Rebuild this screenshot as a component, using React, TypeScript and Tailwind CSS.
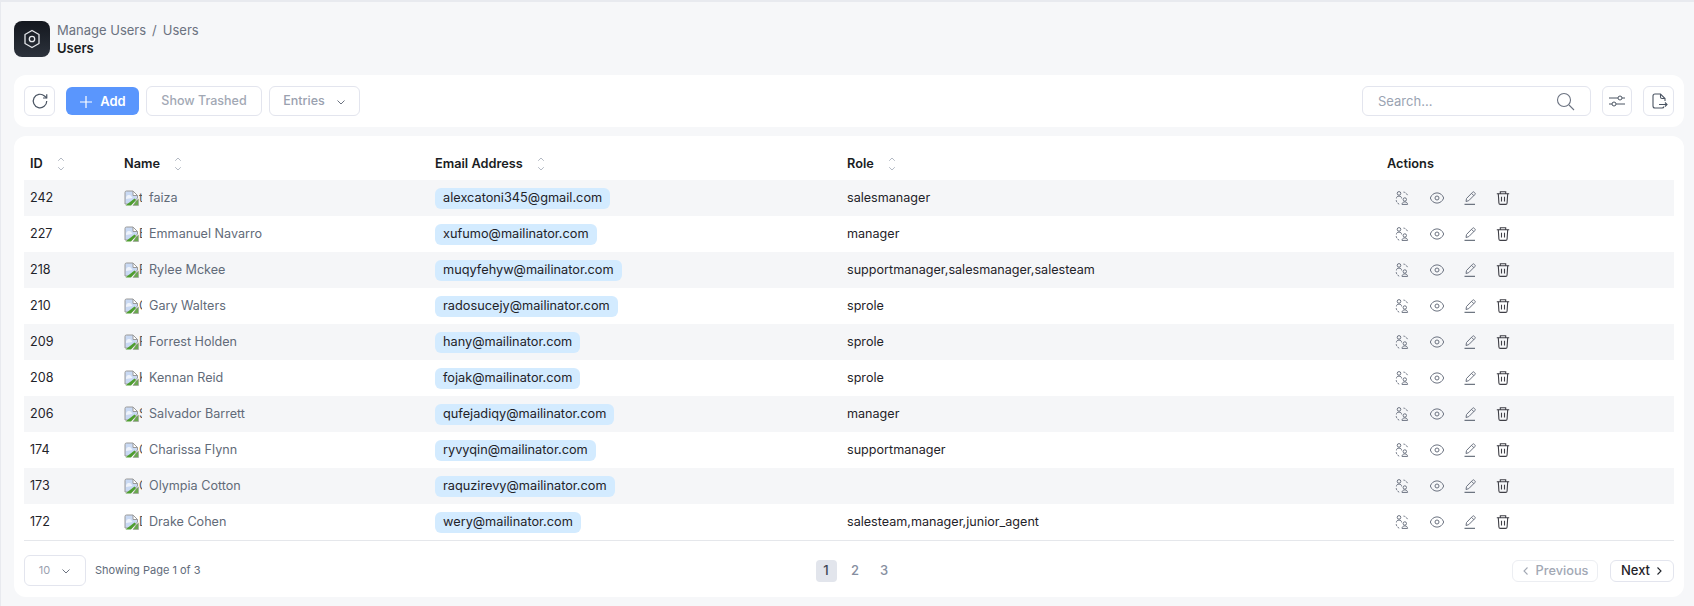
import React from "react";

const rows: [string, string, string, string, string][] = [
  ["242", "t", "faiza", "alexcatoni345@gmail.com", "salesmanager"],
  ["227", "E", "Emmanuel Navarro", "xufumo@mailinator.com", "manager"],
  ["218", "R", "Rylee Mckee", "muqyfehyw@mailinator.com", "supportmanager,salesmanager,salesteam"],
  ["210", "G", "Gary Walters", "radosucejy@mailinator.com", "sprole"],
  ["209", "F", "Forrest Holden", "hany@mailinator.com", "sprole"],
  ["208", "K", "Kennan Reid", "fojak@mailinator.com", "sprole"],
  ["206", "S", "Salvador Barrett", "qufejadiqy@mailinator.com", "manager"],
  ["174", "C", "Charissa Flynn", "ryvyqin@mailinator.com", "supportmanager"],
  ["173", "O", "Olympia Cotton", "raquzirevy@mailinator.com", ""],
  ["172", "D", "Drake Cohen", "wery@mailinator.com", "salesteam,manager,junior_agent"],
];

function Sort() {
  return (
    <svg width="10" height="16" viewBox="0 0 10 16" fill="none" stroke="#b4bac4" strokeWidth="1" className="ml-[13px]">
      <path d="M2.200 4.800L5 2l2.800 2.800" />
      <path d="M2.200 11.200L5 14l2.800-2.800" />
    </svg>
  );
}

function Broken() {
  return (
    <svg width="15" height="16" viewBox="0 0 15 16" className="shrink-0">
      <path d="M1 14V2.500A1.500 1.500 0 0 1 2.500 1H9l4.500 4.500V8l-3 3-3 3z" fill="#c9d9f3" stroke="#9a9a9a" strokeWidth="1" />
      <path d="M9 1v4.500h4.500z" fill="#fff" stroke="#9a9a9a" strokeWidth="1" />
      <path d="M2 7.500a3 3 0 0 1 5.500-1l1 1.500-6.500 1z" fill="#eef3fb" />
      <path d="M1.500 15.500l9-7 1.500 1.500-5 5.500z" fill="#4e9e2f" />
      <path d="M12 11l2.500-2v6.500H9z" fill="#6aa84f" stroke="#9a9a9a" strokeWidth="0.600" />
    </svg>
  );
}

function Swap() {
  return (
    <svg width="16" height="16" viewBox="0 0 16 16" fill="none" stroke="#6b7280" strokeWidth="1">
      <circle cx="5" cy="3.400" r="1.800" />
      <path d="M2.400 8.400c0-1.500 1.100-2.300 2.600-2.300s2.600.8 2.600 2.300" />
      <circle cx="10.800" cy="9.500" r="1.700" />
      <path d="M8 14.400h5.600c0-1.500-1.200-2.500-2.800-2.500S8 12.900 8 14.400z" />
      <path d="M9.500 2.100c2 .2 3.800 1.700 4.200 3.900M2.200 10.200c.2 1.900 1.400 3.400 3.400 4.200" strokeDasharray="2 1.200" />
    </svg>
  );
}

function Eye() {
  return (
    <svg width="16" height="16" viewBox="0 0 16 16" fill="none" stroke="#6b7280" strokeWidth="1">
      <path d="M1.300 8C2.500 4.600 5.200 2.900 8 2.900s5.500 1.700 6.700 5.100c-1.200 3.400-3.900 5.100-6.700 5.100S2.500 11.400 1.300 8z" />
      <circle cx="8" cy="8" r="2" />
    </svg>
  );
}

function Pen() {
  return (
    <svg width="16" height="16" viewBox="0 0 16 16" fill="none" stroke="#6b7280" strokeWidth="1">
      <path d="M4 11.500l.5-3 6-6.200a1.200 1.200 0 0 1 1.800 0l.5.500a1.200 1.200 0 0 1 0 1.800l-6 6z" />
      <path d="M9.500 3.300l2.500 2.500" />
      <path d="M2.500 14.300h10.500" stroke="#4b5563" />
    </svg>
  );
}

function Trash() {
  return (
    <svg width="16" height="16" viewBox="0 0 16 16" fill="none" stroke="#3f3f46" strokeWidth="1.100">
      <path d="M1.800 3.800h12.400M5.300 3.800V1.800h5.400v2" />
      <path d="M3.300 3.800l.6 9.200a1.500 1.500 0 0 0 1.500 1.400h5.200a1.500 1.500 0 0 0 1.500-1.400l.6-9.200" />
      <path d="M6.500 6.800v4.700M9.500 6.800v4.700" />
    </svg>
  );
}

const bordered = "border border-[#e3e5ee] rounded-md bg-white";
const cols = "grid grid-cols-[100px_311px_412px_540px_1fr] items-center";

export default function App() {
  return (
    <div className="h-[606px] overflow-hidden border-t-2 border-l border-[#e8eaef] bg-[#f6f7f9] pl-[13px] pr-[10px] text-[12.6px] font-['Inter',sans-serif] text-[#1f2329]">
      <div className="flex h-[73px] items-start pt-[19px]">
        <div className="flex h-9 w-9 items-center justify-center rounded-lg bg-gradient-to-b from-[#14181f] to-[#2c323c]">
          <svg width="20" height="20" viewBox="0 0 20 20" fill="none" stroke="#e5e7eb" strokeWidth="1.300">
            <path d="M10 1.500l7 4v9l-7 4-7-4v-9z" strokeLinejoin="round" />
            <circle cx="10" cy="10" r="2.700" />
          </svg>
        </div>
        <div className="ml-[7px]">
          <div className="flex h-[18px] items-center text-[13px] leading-[18px] text-[#6b7280]">
            <span>Manage Users</span>
            <span className="mx-[6px]">/</span>
            <span>Users</span>
          </div>
          <div className="h-[18px] text-[13px] font-semibold leading-[18px] text-[#1a1d23]">Users</div>
        </div>
      </div>

      <div className="flex h-[52px] items-center gap-[7px] rounded-xl bg-white px-[10px]">
        <button className={`${bordered} flex h-[30px] w-[31px] items-center justify-center`}>
          <svg width="18" height="18" viewBox="0 0 24 24" fill="none" stroke="#4b5563" strokeWidth="1.600">
            <path d="M21 12a9 9 0 1 1-3-6.700L21 8" />
            <path d="M21 3v5h-5" />
          </svg>
        </button>
        <button className="ml-[4px] flex h-[28px] w-[73px] items-center justify-center gap-[7px] rounded-md bg-[#5a96fd] pt-[1px] text-[13px] font-semibold text-white">
          <svg width="14" height="14" viewBox="0 0 14 14" stroke="#fff" strokeWidth="1.200"><path d="M7 1v12M1 7h12" /></svg>
          Add
        </button>
        <button className={`${bordered} h-[30px] w-[116px] pt-[1px] text-[12.5px] font-medium text-[#a2a8b4]`}>Show Trashed</button>
        <button className={`${bordered} flex h-[30px] w-[91px] items-center justify-center gap-[11px] pt-[1px] text-[12.5px] font-medium text-[#9aa1af]`}>
          Entries
          <svg width="10" height="10" viewBox="0 0 10 10" fill="none" stroke="#6b7280" strokeWidth="1"><path d="M1.500 3.500L5 7l3.500-3.500" /></svg>
        </button>
        <div className="ml-auto flex items-center gap-[11px]">
          <div className={`${bordered} flex h-[30px] w-[229px] items-center justify-between px-[15px] text-[13px] text-[#9aa3b2]`}>
            <span className="pt-[1px]">Search...</span>
            <svg width="19" height="19" viewBox="0 0 19 19" fill="none" stroke="#6b7280" strokeWidth="1.100">
              <circle cx="8" cy="8" r="6.500" />
              <path d="M13 13l5 5" />
            </svg>
          </div>
          <button className={`${bordered} flex h-[30px] w-[30px] items-center justify-center`}>
            <svg width="18" height="18" viewBox="0 0 18 18" fill="none" stroke="#4b5563" strokeWidth="1">
              <path d="M1 6h9M14 6h3M1 12h3M8 12h9" />
              <circle cx="12" cy="6" r="2" />
              <circle cx="6" cy="12" r="2" />
            </svg>
          </button>
          <button className={`${bordered} flex h-[30px] w-[31px] items-center justify-center`}>
            <svg width="18" height="18" viewBox="0 0 18 18" fill="none" stroke="#4b5563" strokeWidth="1.100">
              <path d="M15 9V6.500L10.500 2H5a2 2 0 0 0-2 2v10a2 2 0 0 0 2 2h7a2 2 0 0 0 2-1.500" />
              <path d="M10.500 2v3a1.500 1.500 0 0 0 1.500 1.500h3" />
              <path d="M9 12.500h8M15 10.500l2 2-2 2" />
            </svg>
          </button>
        </div>
      </div>

      <div className="mt-[9px] h-[461px] rounded-xl bg-white px-[10px]">
        <div className={`${cols} h-[44px] pt-[12px] text-[12.75px] font-semibold text-[#1a1d23]`}>
          <div className="flex items-center pl-[6px]">ID<Sort /></div>
          <div className="flex items-center">Name<Sort /></div>
          <div className="flex items-center">Email Address<Sort /></div>
          <div className="flex items-center">Role<Sort /></div>
          <div>Actions</div>
        </div>
        <div className="border-b border-[#e5e7eb]">
          {rows.map((r, i) => (
            <div key={r[0]} className={`${cols} h-9 ${i % 2 === 0 ? "bg-[#f5f6f8]" : "bg-white"}`}>
              <div className="pl-[6px] text-[#1f2329]">{r[0]}</div>
              <div className="flex items-center text-[#626b79]">
                <Broken />
                <span className="w-[3px] overflow-hidden text-[#555]">{r[1]}</span>
                <span className="ml-[7px]">{r[2]}</span>
              </div>
              <div>
                <span className="inline-block h-[21px] rounded-md bg-[#d3ebff] px-2 text-[12.75px] leading-[20px] text-[#1f2329]">{r[3]}</span>
              </div>
              <div className="text-[#1f2329]">{r[4]}</div>
              <div className="flex items-center pl-[7px]">
                <Swap />
                <span className="ml-[19px]"><Eye /></span>
                <span className="ml-[17px]"><Pen /></span>
                <span className="ml-[17px]"><Trash /></span>
              </div>
            </div>
          ))}
        </div>
        <div className="relative mt-[14px] flex items-center">
          <div className={`${bordered} flex h-[31px] w-[62px] items-center justify-center gap-[11px] text-[11px] text-[#9aa1af]`}>
            10
            <svg width="10" height="10" viewBox="0 0 10 10" fill="none" stroke="#6b7280" strokeWidth="1"><path d="M1.500 3.500L5 7l3.500-3.500" /></svg>
          </div>
          <div className="ml-[9px] text-[11px] text-[#5f6b7a]">Showing Page 1 of 3</div>
          <div className="ml-[615px] flex items-center gap-[8px] text-[13px] font-medium text-[#868ea0]">
            <span className="flex h-[22px] w-[21px] items-center justify-center rounded bg-[#e2e5ec] text-[#3f4654]">1</span>
            <span className="w-[21px] text-center">2</span>
            <span className="w-[21px] text-center">3</span>
          </div>
          <div className="ml-auto flex items-center gap-[12px]">
            <button className="flex h-[22px] w-[86px] items-center justify-center gap-[6px] rounded-md border border-[#eceef2] text-[12.75px] font-medium text-[#a2a8b4]">
              <svg width="8" height="10" viewBox="0 0 8 10" fill="none" stroke="#a2a8b4" strokeWidth="1.100"><path d="M5.500 1.500L2 5l3.500 3.500" /></svg>
              Previous
            </button>
            <button className="flex h-[22px] w-[64px] items-center justify-center gap-[5px] rounded-md border border-[#e3e5ee] text-[13px] font-medium text-[#1f2329]">
              Next
              <svg width="8" height="10" viewBox="0 0 8 10" fill="none" stroke="#1f2329" strokeWidth="1.100"><path d="M2.500 1.500L6 5 2.500 8.500" /></svg>
            </button>
          </div>
        </div>
      </div>
    </div>
  );
}
